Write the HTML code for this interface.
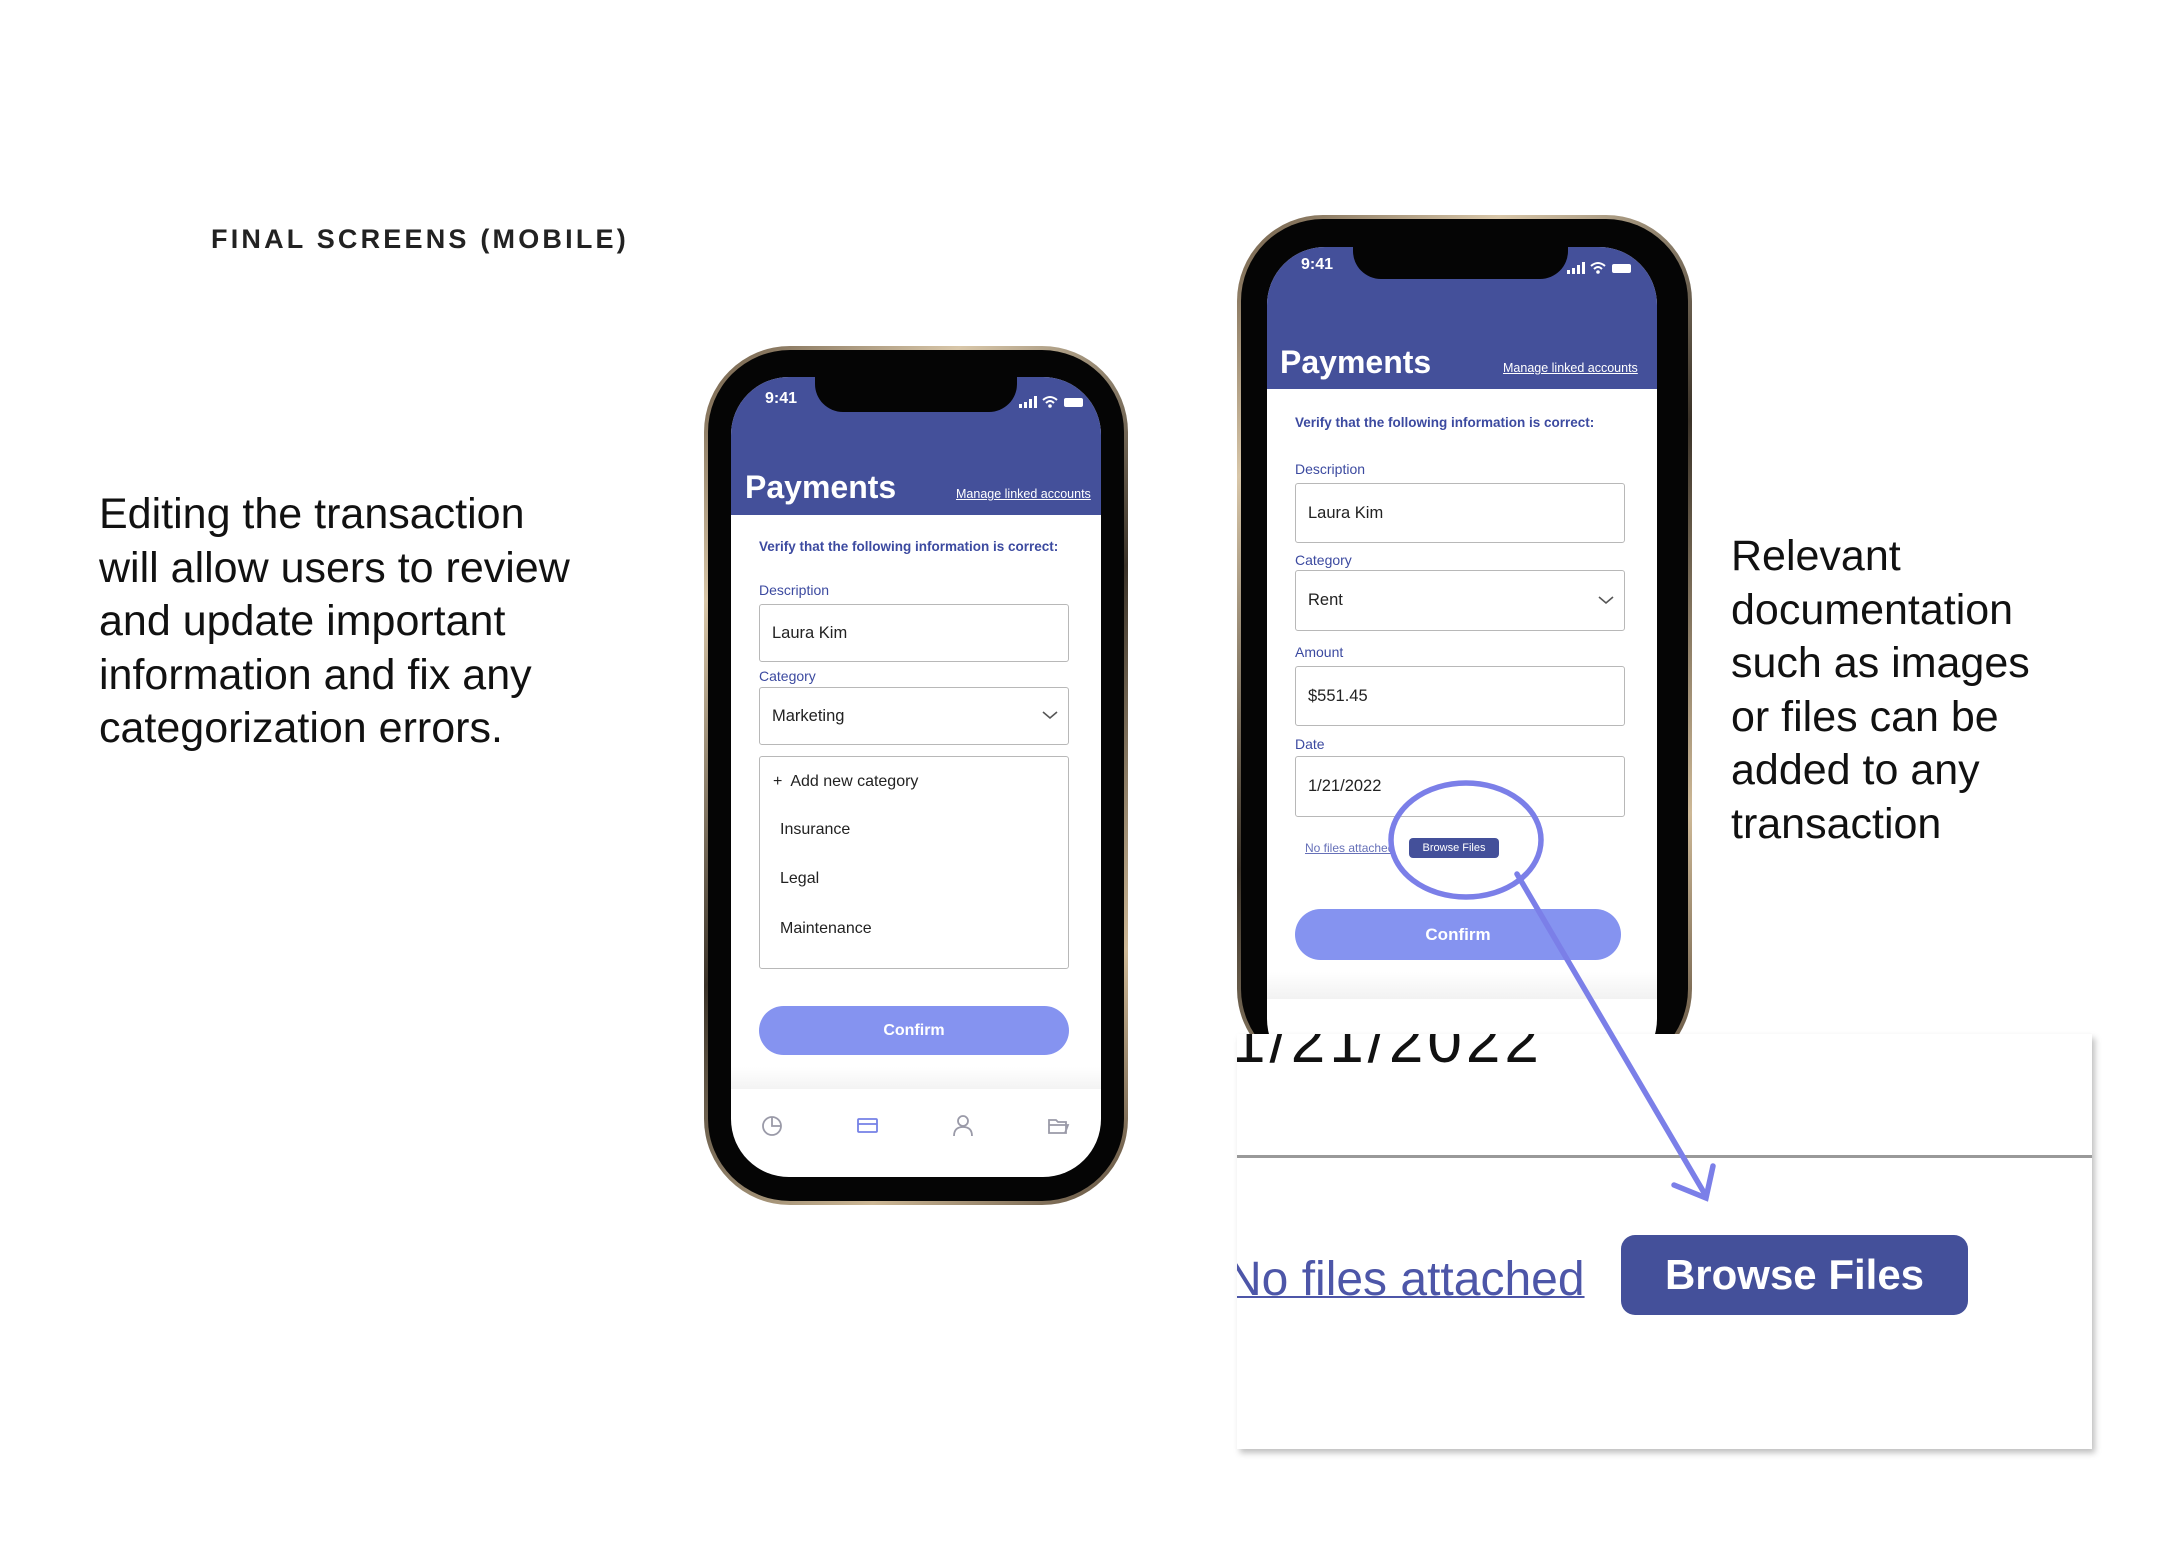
<!DOCTYPE html>
<html><head><meta charset="utf-8"><style>
*{margin:0;padding:0;box-sizing:border-box}
body{width:2176px;height:1550px;background:#fff;position:relative;overflow:hidden;font-family:"Liberation Sans",sans-serif}
.abs{position:absolute}
.title{left:211px;top:224px;font-size:27px;font-weight:bold;letter-spacing:3.2px;color:#222}
.para{font-size:43px;line-height:53.5px;color:#111}
.frame{position:absolute;border-radius:86px;background:linear-gradient(135deg,#6b5a45,#d8c6a8 20%,#3a3228 50%,#cdb896 80%,#5b4c3b);padding:4px}
.frame .blk{width:100%;height:100%;background:#050505;border-radius:82px;position:relative}
.scr{position:absolute;background:#fff;border-radius:58px;overflow:hidden}
.hdr{position:absolute;left:0;top:0;right:0;background:#44509a}
.notch{position:absolute;background:#050505;border-radius:0 0 28px 28px}
.time{position:absolute;color:#fff;font-size:16px;font-weight:bold}
.pay{position:absolute;color:#fff;font-weight:bold;font-size:32px}
.mla{position:absolute;color:#fff;font-size:12.5px;text-decoration:underline}
.ver{position:absolute;color:#3c4aa0;font-weight:bold;font-size:13.5px}
.lbl{position:absolute;color:#3c4aa0;font-size:14px}
.box{position:absolute;border:1.5px solid #b8b8b8;border-radius:3px;font-size:16.5px;color:#222;padding-left:12px;display:flex;align-items:center}
.btn{position:absolute;background:#8593f0;color:#fff;font-weight:bold;font-size:16px;border-radius:30px;display:flex;align-items:center;justify-content:center}
</style></head><body>

<div class="abs title">FINAL SCREENS (MOBILE)</div>
<div class="abs para" style="left:99px;top:488px">Editing the transaction<br>will allow users to review<br>and update important<br>information and fix any<br>categorization errors.</div>
<div class="abs para" style="left:1731px;top:530px">Relevant<br>documentation<br>such as images<br>or files can be<br>added to any<br>transaction</div>

<!-- Phone 1 -->
<div class="frame" style="left:704px;top:346px;width:424px;height:859px"><div class="blk"></div></div>
<div class="scr" style="left:731px;top:377px;width:370px;height:800px">
  <div class="hdr" style="height:138px"></div>
  <div class="notch" style="left:84px;top:0;width:202px;height:35px"></div>
  <div class="time" style="left:34px;top:13px">9:41</div>
  <svg class="abs" style="left:288px;top:18px" width="70" height="14"><rect x="0" y="9" width="3" height="4" fill="#fff"/><rect x="5" y="7" width="3" height="6" fill="#fff"/><rect x="10" y="4" width="3" height="9" fill="#fff"/><rect x="15" y="1" width="3" height="12" fill="#fff"/><path d="M24 5 Q31 -1 38 5 M27 8 Q31 4 35 8" stroke="#fff" stroke-width="2" fill="none"/><circle cx="31" cy="11" r="1.8" fill="#fff"/><rect x="45" y="3" width="19" height="9" rx="2" fill="#fff"/></svg>
  <div class="pay" style="left:14px;top:92px">Payments</div>
  <div class="mla" style="left:225px;top:110px">Manage linked accounts</div>
  <div class="ver" style="left:28px;top:162px">Verify that the following information is correct:</div>
  <div class="lbl" style="left:28px;top:205px">Description</div>
  <div class="box" style="left:28px;top:227px;width:310px;height:58px">Laura Kim</div>
  <div class="lbl" style="left:28px;top:291px">Category</div>
  <div class="box" style="left:28px;top:310px;width:310px;height:58px">Marketing<svg class="abs" style="right:10px;top:22px" width="16" height="10"><path d="M1 2 L8 8 L15 2" stroke="#555" stroke-width="1.6" fill="none"/></svg></div>
  <div class="box" style="left:28px;top:379px;width:310px;height:213px;display:block;padding:0">
    <div class="abs" style="left:13px;top:16px;font-size:16px;color:#222">+&nbsp; Add new category</div>
    <div class="abs" style="left:20px;top:64px;font-size:16px;color:#222">Insurance</div>
    <div class="abs" style="left:20px;top:113px;font-size:16px;color:#222">Legal</div>
    <div class="abs" style="left:20px;top:163px;font-size:16px;color:#222">Maintenance</div>
  </div>
  <div class="btn" style="left:28px;top:629px;width:310px;height:49px">Confirm</div>
  <div class="abs" style="left:0;top:690px;width:370px;height:22px;background:linear-gradient(#fff,#f3f3f3)"></div>
  <svg class="abs" style="left:0;top:735px" width="370" height="30">
    <g stroke="#9a9aa8" stroke-width="1.8" fill="none"><circle cx="41" cy="14" r="9"/><path d="M41 5 V14 H50"/>
    <path d="M223 24 Q223 15 232 15 Q241 15 241 24"/><circle cx="232" cy="9" r="5"/>
    <path d="M318 8 H325 L327 10 H335 V21 H318 Z M318 13 H337 L334 21"/></g>
    <g stroke="#7581e6" stroke-width="1.8" fill="none"><rect x="127" y="7" width="19" height="13" rx="1"/><path d="M127 12 H146"/></g>
  </svg>
</div>

<!-- Phone 2 (cropped) -->
<div class="abs" style="left:1237px;top:215px;width:455px;height:819px;overflow:hidden">
  <div class="frame" style="left:0;top:0;width:455px;height:860px"><div class="blk"></div></div>
  <div class="scr" style="left:30px;top:32px;width:390px;height:830px">
    <div class="hdr" style="height:142px"></div>
    <div class="notch" style="left:86px;top:0;width:215px;height:32px"></div>
    <div class="time" style="left:34px;top:9px">9:41</div>
    <svg class="abs" style="left:300px;top:14px" width="70" height="14"><rect x="0" y="9" width="3" height="4" fill="#fff"/><rect x="5" y="7" width="3" height="6" fill="#fff"/><rect x="10" y="4" width="3" height="9" fill="#fff"/><rect x="15" y="1" width="3" height="12" fill="#fff"/><path d="M24 5 Q31 -1 38 5 M27 8 Q31 4 35 8" stroke="#fff" stroke-width="2" fill="none"/><circle cx="31" cy="11" r="1.8" fill="#fff"/><rect x="45" y="3" width="19" height="9" rx="2" fill="#fff"/></svg>
    <div class="pay" style="left:13px;top:97px">Payments</div>
    <div class="mla" style="left:236px;top:114px">Manage linked accounts</div>
    <div class="ver" style="left:28px;top:168px">Verify that the following information is correct:</div>
    <div class="lbl" style="left:28px;top:214px">Description</div>
    <div class="box" style="left:28px;top:236px;width:330px;height:60px">Laura Kim</div>
    <div class="lbl" style="left:28px;top:305px">Category</div>
    <div class="box" style="left:28px;top:323px;width:330px;height:61px">Rent<svg class="abs" style="right:10px;top:24px" width="16" height="10"><path d="M1 2 L8 8 L15 2" stroke="#555" stroke-width="1.6" fill="none"/></svg></div>
    <div class="lbl" style="left:28px;top:397px">Amount</div>
    <div class="box" style="left:28px;top:419px;width:330px;height:60px">$551.45</div>
    <div class="lbl" style="left:28px;top:489px">Date</div>
    <div class="box" style="left:28px;top:509px;width:330px;height:61px">1/21/2022</div>
    <div class="abs" style="left:38px;top:594px;font-size:12px;color:#6670b8;text-decoration:underline">No files attached</div>
    <div class="abs" style="left:142px;top:591px;width:90px;height:20px;background:#44509a;border-radius:4px;color:#fff;font-size:11px;display:flex;align-items:center;justify-content:center">Browse Files</div>
    <div class="btn" style="left:28px;top:662px;width:326px;height:51px;font-size:17px">Confirm</div>
    <div class="abs" style="left:0;top:725px;width:390px;height:27px;background:linear-gradient(#fff,#f2f2f2)"></div>
  </div>
</div>

<!-- Zoom panel -->
<div class="abs" style="left:1237px;top:1034px;width:855px;height:415px;background:#fff;box-shadow:3px 4px 6px rgba(0,0,0,0.25);overflow:hidden">
  <div class="abs" style="left:-6px;top:-28px;font-size:62px;color:#111;letter-spacing:4px">1/21/2022</div>
  <div class="abs" style="left:0;top:121px;width:855px;height:3px;background:#999"></div>
  <div class="abs" style="left:-10px;top:218px;font-size:48px;color:#4d56a8;text-decoration:underline;text-decoration-thickness:2px">No files attached</div>
  <div class="abs" style="left:384px;top:201px;width:347px;height:80px;background:#44509a;border-radius:14px;color:#fff;font-size:42px;font-weight:bold;display:flex;align-items:center;justify-content:center">Browse Files</div>
</div>

<!-- Annotation -->
<svg class="abs" style="left:0;top:0" width="2176" height="1550">
  <g stroke="#7b7fe8" stroke-width="5.5" fill="none" stroke-linecap="round">
    <ellipse cx="1466" cy="840" rx="75" ry="57"/>
    <path d="M1517 874 L1706 1196"/>
    <path d="M1674 1185 L1706 1198 L1713 1166"/>
  </g>
</svg>
</body></html>
